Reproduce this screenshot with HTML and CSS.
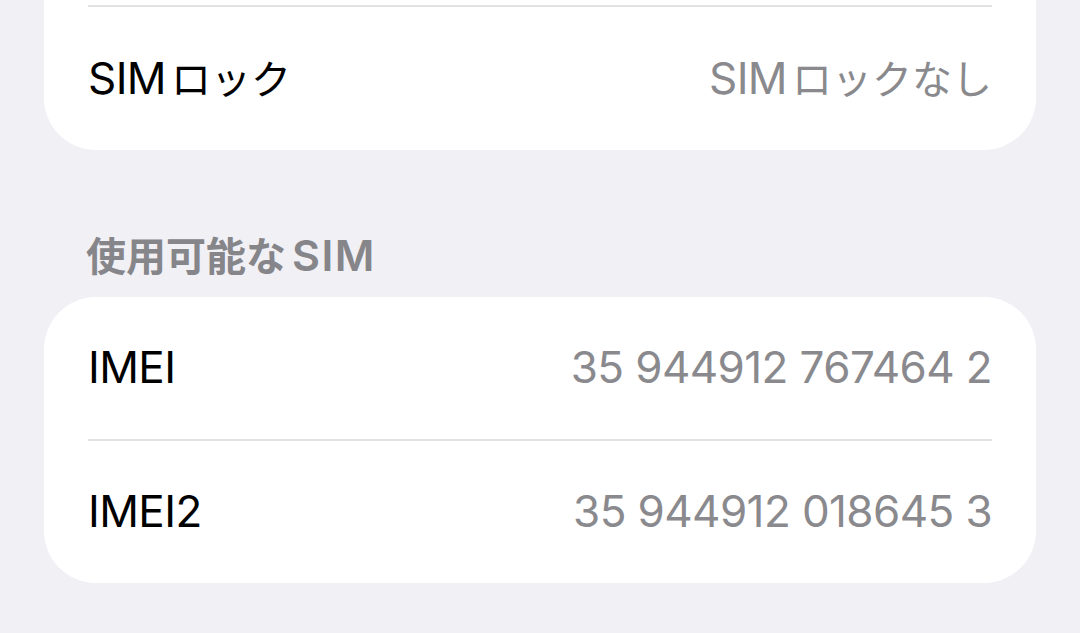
FILE: index.html
```html
<!DOCTYPE html>
<html lang="ja">
<head>
    <meta charset="UTF-8">
    <meta name="viewport" content="width=device-width, initial-scale=1.0">
    <title>SIM</title>
    <link rel="stylesheet" href="styles.css">
</head>
<body>
    <div class="page">
        <div class="card card-top">
            <div class="row divided">
                <span class="label">SIM<span class="ja">ロック</span></span>
                <span class="value">SIM<span class="ja">ロックなし</span></span>
            </div>
        </div>

        <div class="section-header"><span class="ja">使用可能な</span><span class="latin">SIM</span></div>

        <div class="card">
            <div class="row">
                <span class="label">IMEI</span>
                <span class="value">35 944912 767464 2</span>
            </div>
            <div class="row divided">
                <span class="label">IMEI2</span>
                <span class="value">35 944912 018645 3</span>
            </div>
        </div>
    </div>
</body>
</html>
```

FILE: styles.css
```css
body {
    margin: 0;
    padding: 0;
    background-color: #f0f0f5;
    font-family: Inter, "Noto Sans CJK JP", sans-serif;
    -webkit-font-smoothing: antialiased;
}
.page {
    padding: 0 44px;
}
.card {
    background: white;
    border-radius: 52px;
}
.card-top {
    border-radius: 0 0 52px 52px;
    padding-top: 5px;
}
.row {
    display: flex;
    justify-content: space-between;
    align-items: center;
    margin: 0 44px;
    height: 142px;
    padding-bottom: 3px;
    box-sizing: border-box;
    font-size: 44px;
    letter-spacing: -0.6px;
}
.row.divided {
    height: 144px;
    border-top: 2px solid #e2e2e5;
}
.card-top .row.divided {
    height: 145px;
}
.label {
    color: #000;
}
.value {
    color: #8a8a8e;
}
.ja {
    font-family: "Noto Sans CJK JP", sans-serif;
    font-size: 40px;
    letter-spacing: 0;
}
.row .ja {
    margin-left: 5px;
}
.section-header {
    padding: 80px 44px 19px;
    height: 48px;
    line-height: 48px;
    font-size: 40px;
    font-weight: 600;
    color: #85858a;
}
.section-header .ja {
    margin-left: -2px;
}
.section-header .latin {
    font-size: 43px;
    letter-spacing: 1.5px;
    margin-left: 6px;
}
```
